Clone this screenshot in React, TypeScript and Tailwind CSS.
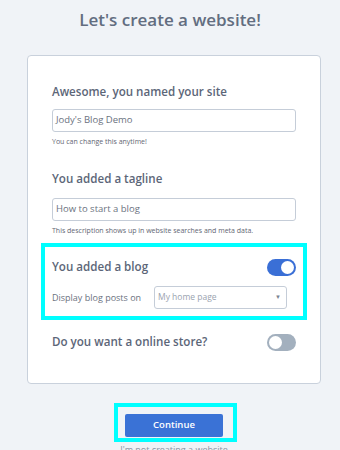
import React from "react";

function Toggle({ on }: { on: boolean }) {
  return (
    <div
      className={`flex h-[17px] w-[29px] items-center rounded-full px-[2px] ${
        on ? "justify-end bg-[#3a6fd6]" : "justify-start bg-[#a3b0be]"
      }`}
    >
      <div className="h-[13px] w-[13px] rounded-full bg-white" />
    </div>
  );
}

export default function App() {
  return (
    <div
      className="min-h-[450px] bg-[#f0f3f7] pt-[8px] text-[#5c6678]"
      style={{ fontFamily: '"Open Sans", "Liberation Sans", sans-serif' }}
    >
      <h1 className="text-center text-[17px] font-semibold leading-[24px] text-[#626d80]">
        Let's create a website!
      </h1>

      <div className="ml-[27px] mt-[23px] w-[294px] rounded-[4px] border border-[#c9d1dc] bg-white px-[24px] pb-[31px] pt-[26px]">
        <h2 className="text-[11.6px] font-semibold leading-[20px]">
          Awesome, you named your site
        </h2>
        <div className="mt-[7px] flex h-[23px] items-center rounded-[3px] border border-[#c5cdd8] pl-[3px] text-[9.5px] text-[#6b7280]">
          Jody's Blog Demo
        </div>
        <p className="mt-[5px] text-[7px] leading-[10px] text-[#5f6673]">
          You can change this anytime!
        </p>

        <h2 className="mt-[22px] text-[11.6px] font-semibold leading-[20px]">
          You added a tagline
        </h2>
        <div className="mt-[9px] flex h-[23px] items-center rounded-[3px] border border-[#c5cdd8] pl-[3px] text-[9.5px] text-[#6b7280]">
          How to start a blog
        </div>
        <p className="mt-[5px] text-[7px] leading-[10px] text-[#5f6673]">
          This description shows up in website searches and meta data.
        </p>

        <div className="-mx-[11px] mt-[7px] border-4 border-[#00ffff] px-[7px] pb-[7px] pt-[10px]">
          <div className="flex h-[20px] items-center justify-between">
            <h2 className="text-[11.6px] font-semibold leading-[20px]">
              You added a blog
            </h2>
            <Toggle on />
          </div>
          <div className="mt-[9px] flex items-center">
            <span className="w-[102px] text-[9px] text-[#6b7280]">
              Display blog posts on
            </span>
            <div className="flex h-[23px] w-[133px] items-center justify-between rounded-[3px] border border-[#c5cdd8] pl-[3px] pr-[5px] text-[8.5px] text-[#9aa3af]">
              <span>My home page</span>
              <span className="text-[6px] text-[#7a8391]">▼</span>
            </div>
          </div>
        </div>

        <div className="mt-[12px] flex h-[20px] items-center justify-between">
          <h2 className="text-[11.6px] font-semibold leading-[20px]">
            Do you want a online store?
          </h2>
          <Toggle on={false} />
        </div>
      </div>

      <div className="ml-[114px] mt-[19px] h-[39px] w-[123px] border-4 border-[#00ffff] pl-[7px] pt-[3px]">
        <button className="h-[23px] w-[98px] rounded-[2px] bg-[#3a72d6] text-[9.5px] font-semibold text-white">
          Continue
        </button>
      </div>
      <p className="ml-[27px] mt-[2px] w-[294px] text-center text-[9px] leading-[12px] text-[#8a94a3]">
        I'm not creating a website
      </p>
    </div>
  );
}
